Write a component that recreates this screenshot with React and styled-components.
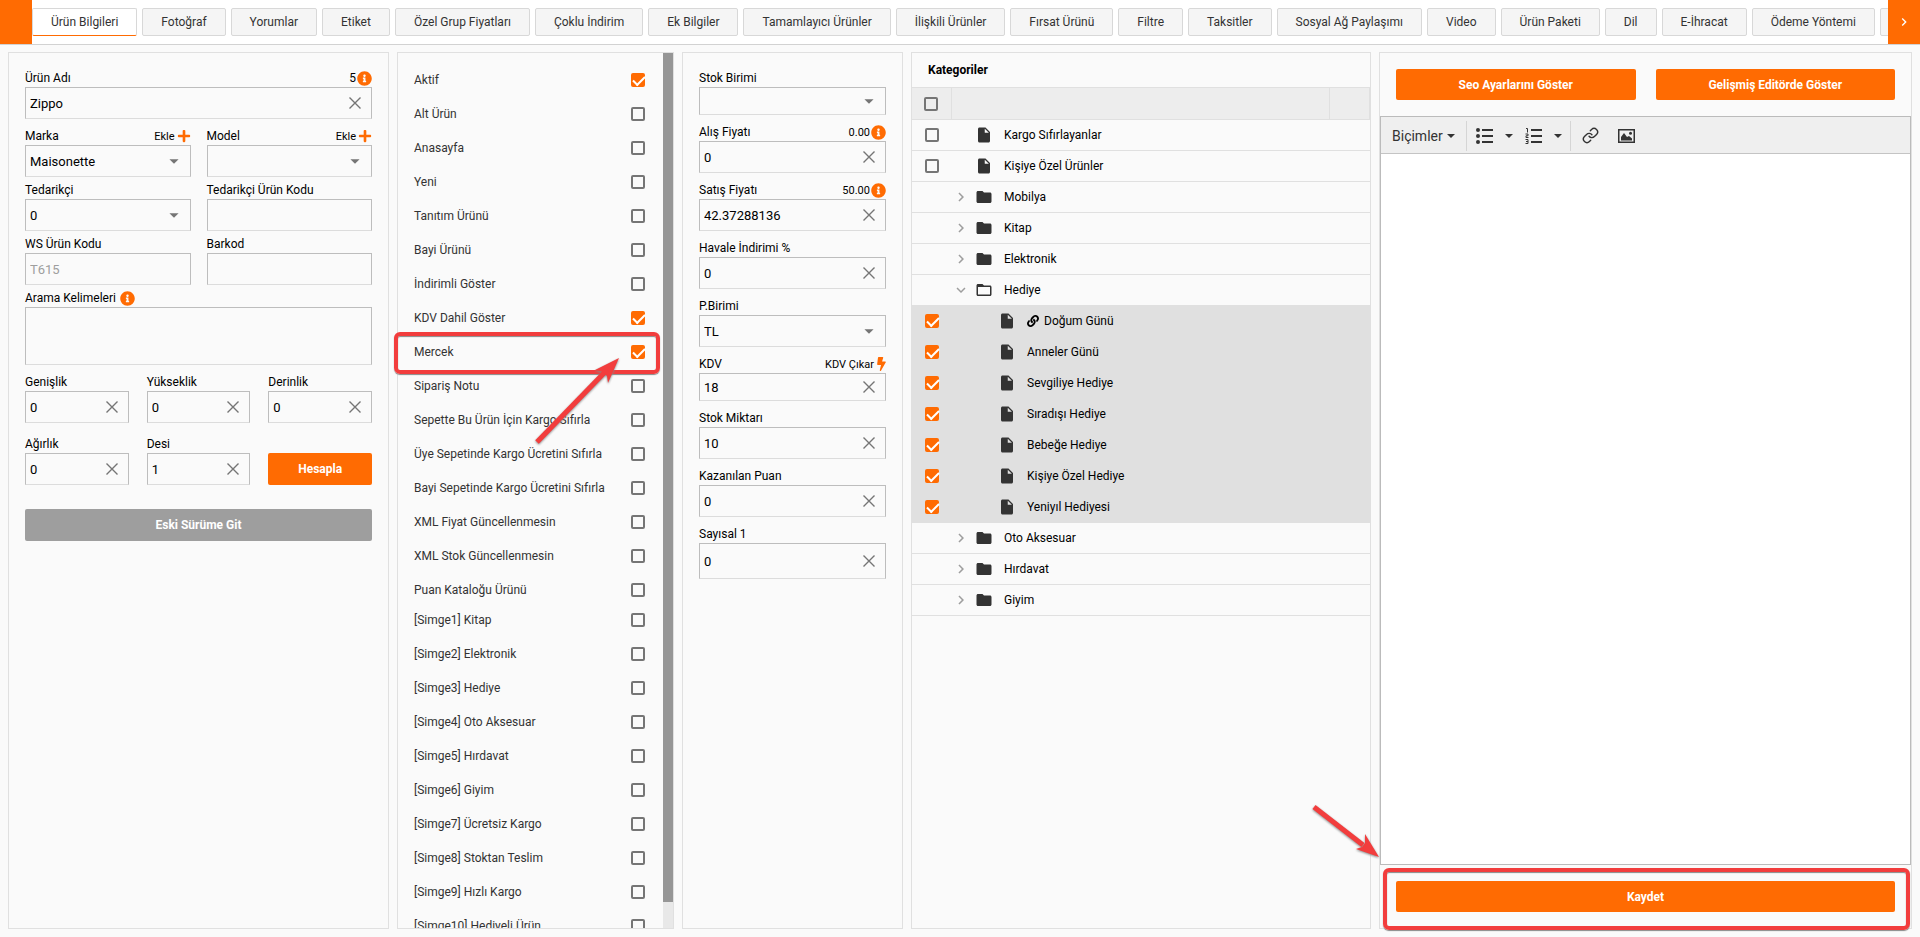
import { useState } from "react";
import styled, { createGlobalStyle, css } from "styled-components";
import { FaInfoCircle, FaLink, FaPlus } from "react-icons/fa";
import {
    MdArrowDropDown,
    MdChevronRight,
    MdExpandMore,
    MdFolder,
    MdFolderOpen,
    MdInsertDriveFile,
} from "react-icons/md";
import { Link as LinkIcon } from "lucide-react";

const orange = "#ff6b02";
const line = "#e0e0e0";
const red = "#f23d3d";

const GlobalStyle = createGlobalStyle`
* { box-sizing: border-box; }
body {
margin: 0;
background: #fafafa;
color: #000;
font-family: Roboto, "Liberation Sans", sans-serif;
font-size: 12px;
}
button, input, select, textarea { font: inherit; color: inherit; }
`

const Page = styled.div`
display: flex;
flex-direction: column;
height: 100vh;
`

/* tabs */
const TabBar = styled.nav`
display: flex;
flex: none;
background: #fff;
border-bottom: 1px solid #d2d2d2;
`
const TabScroll = styled.button`
flex: none;
display: flex;
align-items: center;
justify-content: center;
width: 32px;
height: 44px;
padding: 0;
border: 0;
background: ${orange};
color: #fff;
`
const Tabs = styled.div`
flex: 1;
min-width: 0;
display: flex;
align-items: center;
gap: 5px;
overflow: hidden;
`
const Tab = styled.button`
flex: none;
height: 28px;
min-width: 44px;
padding: 0 18px;
border: 1px solid #d8d8d8;
border-radius: 2px;
background: #f5f5f5;
color: #333;
${(p) => p.$active && css`
background: #fff;
border-bottom-color: ${orange};
`}
`

/* panels */
const Panels = styled.main`
flex: 1;
min-height: 0;
display: grid;
grid-template-columns: 381fr 277fr 221fr 460fr 533fr;
gap: 8px;
padding: 7px 8px 8px;
`
const Panel = styled.section`
position: relative;
min-width: 0;
min-height: 0;
border: 1px solid ${line};
`
const FormPanel = styled(Panel)`
padding: 16px;
`
const Row = styled.div`
display: grid;
grid-template-columns: repeat(${(p) => p.$cols || 1}, minmax(0, 1fr));
gap: ${(p) => (p.$cols === 3 ? 18 : 16)}px;
align-items: end;
margin-bottom: ${(p) => p.$space || 4}px;
`
const FieldHead = styled.div`
display: flex;
justify-content: ${(p) => (p.$near ? "flex-start" : "space-between")};
gap: 4px;
align-items: center;
height: 18px;
`
const Side = styled.span`
display: flex;
align-items: center;
gap: ${(p) => p.$gap || 1}px;
font-size: ${(p) => (p.$large ? 12 : 11)}px;
svg { color: ${orange}; }
`
const AddLink = styled.a`
display: flex;
align-items: center;
gap: 2px;
color: #000;
font-size: 11px;
text-decoration: none;
svg { color: ${orange}; }
`
const Box = styled.div`
position: relative;
display: flex;
height: ${(p) => p.$height || 32}px;
border: 1px solid #bdbdbd;
border-bottom-color: #dcdcdc;
font-size: 13px;
> svg {
position: absolute;
right: 5px;
top: 50%;
margin-top: -11px;
color: #757575;
pointer-events: none;
}
`
const Input = styled.input`
flex: 1;
width: 0;
padding: 0 4px;
border: 0;
background: transparent;
outline: none;
&:disabled { color: #9e9e9e; }
`
const Select = styled.select`
flex: 1;
width: 0;
padding: 0 4px;
border: 0;
background: transparent;
appearance: none;
outline: none;
`
const TextArea = styled.textarea`
display: block;
width: 100%;
height: 58px;
border: 1px solid #bdbdbd;
border-bottom-color: #dcdcdc;
background: transparent;
resize: none;
`
const ClearButton = styled.button`
flex: none;
display: flex;
align-items: center;
justify-content: center;
width: 32px;
padding: 0;
border: 0;
background: transparent;
`
const Button = styled.button`
width: 100%;
height: ${(p) => p.$height || 32}px;
padding: 0;
border: 0;
border-radius: 2px;
background: ${(p) => (p.$grey ? "#9e9e9e" : orange)};
color: #fff;
font-weight: bold;
`
const Spaced = styled.div`
padding-top: 20px;
`

/* check list */
const CheckBox = styled.input.attrs({ type: "checkbox" })`
flex: none;
appearance: none;
display: block;
position: relative;
width: 14px;
height: 14px;
margin: 0;
border: 2px solid #757575;
border-radius: 2px;
&:checked {
border-color: ${orange};
background: ${orange};
}
&:checked::after {
content: "";
position: absolute;
left: 0;
top: 1px;
width: 10px;
height: 5px;
border: solid #fff;
border-width: 0 0 2px 2px;
transform: rotate(-45deg);
}
`
const CheckPanel = styled(Panel)`
display: flex;
`
const CheckArea = styled.div`
flex: 1;
min-width: 0;
padding: 12px 18px 0 16px;
overflow: hidden;
`
const CheckGroup = styled.div`
display: flex;
flex-direction: column;
gap: 4px;
`
const CheckRow = styled.label`
display: flex;
flex: none;
align-items: center;
justify-content: space-between;
height: 30px;
color: #333;
white-space: nowrap;
`
const ScrollTrack = styled.div`
flex: none;
width: 10px;
background: #e8e8e8;
`
const ScrollThumb = styled.div`
height: 97%;
background: #969696;
`

/* categories */
const PanelTitle = styled.h2`
height: 34px;
margin: 0;
padding-left: 16px;
font-size: 12px;
line-height: 34px;
`
const Table = styled.table`
width: 100%;
table-layout: fixed;
border-collapse: separate;
border-spacing: 0;
th {
height: 33px;
padding: 0 0 0 12px;
background: #ededed;
border: solid ${line};
border-width: 1px 1px 1px 0;
}
td {
height: 31px;
padding: 0;
border-bottom: 1px solid ${line};
}
td:first-child { padding-left: 13px; }
`
const CategoryRow = styled.tr`
background: ${(p) => (p.$selected ? "#e0e0e0" : "transparent")};
`
const TreeItem = styled.div`
display: flex;
align-items: center;
padding-left: ${(p) => (p.$child ? 23 : 0)}px;
`
const Toggle = styled.span`
display: flex;
justify-content: center;
width: 18px;
margin-right: 5px;
color: #9e9e9e;
`
const TypeIcon = styled.span`
display: flex;
width: 18px;
margin-right: 11px;
color: #333;
`
const Linked = styled.span`
display: flex;
margin-right: 5px;
`

/* editor */
const EditorPanel = styled(Panel)`
display: flex;
flex-direction: column;
`
const EditorActions = styled.div`
display: grid;
grid-template-columns: 1fr 1fr;
gap: 20px;
padding: 16px;
`
const Editor = styled.div`
flex: 1;
min-height: 0;
display: flex;
flex-direction: column;
border: 1px solid #bbb;
`
const Toolbar = styled.div`
display: flex;
align-items: center;
height: 37px;
flex: none;
padding: 1px 0 0 5px;
background: #efefef;
border-bottom: 1px solid #c4c4c4;
`
const ToolGroup = styled.div`
display: flex;
align-items: center;
height: 30px;
padding-right: 5px;
& + & {
border-left: 1px solid #d5d5d5;
}
`
const Tool = styled.button`
display: flex;
align-items: center;
justify-content: center;
gap: 4px;
height: 30px;
padding: 0 ${(p) => p.$pad}px;
border: 0;
background: transparent;
color: #333;
font-size: 14px;
`
const Writing = styled.textarea`
flex: 1;
width: 100%;
border: 0;
background: #fff;
resize: none;
outline: none;
`
const Footer = styled.div`
position: relative;
flex: none;
padding: 16px;
`

/* marks over the page */
const CheckMark = styled.div`
position: absolute;
left: -4px;
right: 13px;
top: 279px;
height: 42px;
border: 4px solid ${red};
border-radius: 6px;
box-shadow: 0 1px 1px #888, inset 0 1px 1px #888;
pointer-events: none;
`
const SaveMark = styled(CheckMark)`
left: 3px;
right: 1px;
top: 3px;
bottom: -2px;
height: auto;
`
const CheckArrow = styled.svg`
position: absolute;
left: 135px;
top: 301px;
filter: drop-shadow(0 1px 1px #888);
pointer-events: none;
`
const SaveArrow = styled(CheckArrow)`
left: -70px;
top: -62px;
`

const tabs = [
    "Ürün Bilgileri", "Fotoğraf", "Yorumlar", "Etiket", "Özel Grup Fiyatları",
    "Çoklu İndirim", "Ek Bilgiler", "Tamamlayıcı Ürünler", "İlişkili Ürünler",
    "Fırsat Ürünü", "Filtre", "Taksitler", "Sosyal Ağ Paylaşımı", "Video",
    "Ürün Paketi", "Dil", "E-İhracat", "Ödeme Yöntemi", "",
]

const options = [
    ["Aktif", true], ["Alt Ürün"], ["Anasayfa"], ["Yeni"], ["Tanıtım Ürünü"],
    ["Bayi Ürünü"], ["İndirimli Göster"], ["KDV Dahil Göster", true],
    ["Mercek", true], ["Sipariş Notu"], ["Sepette Bu Ürün İçin Kargo Sıfırla"],
    ["Üye Sepetinde Kargo Ücretini Sıfırla"],
    ["Bayi Sepetinde Kargo Ücretini Sıfırla"], ["XML Fiyat Güncellenmesin"],
    ["XML Stok Güncellenmesin"], ["Puan Kataloğu Ürünü"],
]

const symbols = [
    ["[Simge1] Kitap"], ["[Simge2] Elektronik"], ["[Simge3] Hediye"],
    ["[Simge4] Oto Aksesuar"], ["[Simge5] Hırdavat"], ["[Simge6] Giyim"],
    ["[Simge7] Ücretsiz Kargo"], ["[Simge8] Stoktan Teslim"],
    ["[Simge9] Hızlı Kargo"], ["[Simge10] Hediyeli Ürün"],
]

const categories = [
    { name: "Kargo Sıfırlayanlar", type: "file" },
    { name: "Kişiye Özel Ürünler", type: "file" },
    { name: "Mobilya", type: "folder" },
    { name: "Kitap", type: "folder" },
    { name: "Elektronik", type: "folder" },
    { name: "Hediye", type: "open" },
    { name: "Doğum Günü", type: "file", child: true, linked: true },
    { name: "Anneler Günü", type: "file", child: true },
    { name: "Sevgiliye Hediye", type: "file", child: true },
    { name: "Sıradışı Hediye", type: "file", child: true },
    { name: "Bebeğe Hediye", type: "file", child: true },
    { name: "Kişiye Özel Hediye", type: "file", child: true },
    { name: "Yeniyıl Hediyesi", type: "file", child: true },
    { name: "Oto Aksesuar", type: "folder" },
    { name: "Hırdavat", type: "folder" },
    { name: "Giyim", type: "folder" },
]

const typeIcons = {
    file: <MdInsertDriveFile size={18} />,
    folder: <MdFolder size={18} />,
    open: <MdFolderOpen size={18} />,
}

function Info({ text, large }) {
    return <Side $large={large}>{text}<FaInfoCircle size={15} /></Side>
}

function Add() {
    return <AddLink href="#">Ekle<FaPlus size={14} /></AddLink>
}

function Bolt() {
    return (
        <svg width="9" height="14" viewBox="0 0 320 512" fill="currentColor">
            <path d="M296 160H180.600l42.600-129.800C227.200 15 215.700 0 200 0H56C44 0 33.800 8.900 32.200 20.800l-32 240C-1.700 275.200 9.500 288 24 288h118.700L96.600 482.500c-3.600 15.200 8 29.500 23.300 29.500 8.400 0 16.400-4.400 20.800-12l176-304c9.300-15.900-2.200-36-20.700-36z" />
        </svg>
    )
}

function TextField({ id, label, side, value = "", clear, height, disabled }) {
    const [text, setText] = useState(value)
    return (
        <div>
            <FieldHead><label htmlFor={id}>{label}</label>{side}</FieldHead>
            <Box $height={height}>
                <Input id={id} value={text} disabled={disabled} onChange={(e) => setText(e.target.value)} />
                {clear && (
                    <ClearButton type="button" aria-label="Temizle" onClick={() => setText("")}>
                        <svg width="12" height="12" viewBox="0 0 12 12" stroke="#757575" strokeWidth="1.4">
                            <path d="M.5.5l11 11M11.5.5l-11 11" />
                        </svg>
                    </ClearButton>
                )}
            </Box>
        </div>
    )
}

function SelectField({ id, label, side, value = "", height }) {
    return (
        <div>
            <FieldHead><label htmlFor={id}>{label}</label>{side}</FieldHead>
            <Box $height={height}>
                <Select id={id} defaultValue={value}>
                    <option value={value}>{value}</option>
                </Select>
                <MdArrowDropDown size={22} />
            </Box>
        </div>
    )
}

function CheckList({ items }) {
    return (
        <CheckGroup>
            {items.map(([name, checked]) => (
                <CheckRow key={name}>
                    {name}
                    <CheckBox defaultChecked={checked} />
                </CheckRow>
            ))}
        </CheckGroup>
    )
}

function Caret() {
    return (
        <svg width="8" height="4" viewBox="0 0 8 4" fill="#333"><path d="M0 0h8L4 4z" /></svg>
    )
}

function ProductForm() {
    return (
        <FormPanel>
            <Row $space={8}>
                <TextField id="name" label="Ürün Adı" value="Zippo" clear side={<Info text="5" large />} />
            </Row>
            <Row $cols={2}>
                <SelectField id="brand" label="Marka" value="Maisonette" side={<Add />} />
                <SelectField id="model" label="Model" side={<Add />} />
            </Row>
            <Row $cols={2}>
                <SelectField id="supplier" label="Tedarikçi" value="0" />
                <TextField id="supplierCode" label="Tedarikçi Ürün Kodu" />
            </Row>
            <Row $cols={2}>
                <TextField id="wsCode" label="WS Ürün Kodu" value="T615" disabled />
                <TextField id="barcode" label="Barkod" />
            </Row>
            <Row $space={8}>
                <div>
                    <FieldHead $near><label htmlFor="keywords">Arama Kelimeleri</label><Info /></FieldHead>
                    <TextArea id="keywords" />
                </div>
            </Row>
            <Row $cols={3} $space={12}>
                <TextField id="width" label="Genişlik" value="0" clear />
                <TextField id="height" label="Yükseklik" value="0" clear />
                <TextField id="depth" label="Derinlik" value="0" clear />
            </Row>
            <Row $cols={3}>
                <TextField id="weight" label="Ağırlık" value="0" clear />
                <TextField id="desi" label="Desi" value="1" clear />
                <Button>Hesapla</Button>
            </Row>
            <Spaced>
                <Button $grey>Eski Sürüme Git</Button>
            </Spaced>
        </FormPanel>
    )
}

function PriceForm() {
    return (
        <FormPanel>
            <Row $space={8}><SelectField id="unit" label="Stok Birimi" height={28} /></Row>
            <Row $space={8}><TextField id="buy" label="Alış Fiyatı" value="0" clear side={<Info text="0.00" />} /></Row>
            <Row $space={8}><TextField id="sell" label="Satış Fiyatı" value="42.37288136" clear side={<Info text="50.00" />} /></Row>
            <Row $space={8}><TextField id="discount" label="Havale İndirimi %" value="0" clear /></Row>
            <Row $space={8}><SelectField id="currency" label="P.Birimi" value="TL" /></Row>
            <Row $space={8}>
                <TextField id="vat" label="KDV" value="18" clear height={28} side={<Side $gap={3}>KDV Çıkar<Bolt /></Side>} />
            </Row>
            <Row $space={8}><TextField id="stock" label="Stok Miktarı" value="10" clear /></Row>
            <Row $space={8}><TextField id="points" label="Kazanılan Puan" value="0" clear /></Row>
            <Row $space={8}><TextField id="number1" label="Sayısal 1" value="0" clear height={36} /></Row>
        </FormPanel>
    )
}

function Categories() {
    return (
        <Panel>
            <PanelTitle>Kategoriler</PanelTitle>
            <Table>
                <colgroup>
                    <col width="40" />
                    <col />
                    <col width="40" />
                </colgroup>
                <thead>
                    <tr>
                        <th><CheckBox aria-label="Kategoriler" /></th>
                        <th />
                        <th />
                    </tr>
                </thead>
                <tbody>
                    {categories.map(({ name, type, child, linked }) => (
                        <CategoryRow key={name} $selected={child}>
                            <td>{type === "file" && <CheckBox defaultChecked={child} aria-label={name} />}</td>
                            <td colSpan={2}>
                                <TreeItem $child={child}>
                                    <Toggle>
                                        {type === "folder" && <MdChevronRight size={18} />}
                                        {type === "open" && <MdExpandMore size={18} />}
                                    </Toggle>
                                    <TypeIcon>{typeIcons[type]}</TypeIcon>
                                    {linked && <Linked><FaLink size={12} /></Linked>}
                                    {name}
                                </TreeItem>
                            </td>
                        </CategoryRow>
                    ))}
                </tbody>
            </Table>
        </Panel>
    )
}

function EditorSide() {
    return (
        <EditorPanel>
            <EditorActions>
                <Button $height={31}>Seo Ayarlarını Göster</Button>
                <Button $height={31}>Gelişmiş Editörde Göster</Button>
            </EditorActions>
            <Editor>
                <Toolbar>
                    <ToolGroup>
                        <Tool $pad={6}>Biçimler <Caret /></Tool>
                    </ToolGroup>
                    <ToolGroup>
                        <Tool $pad={9} aria-label="Madde listesi">
                            <svg width="17" height="16" viewBox="0 0 17 16" fill="#333">
                                <circle cx="2" cy="2" r="2" /><circle cx="2" cy="8" r="2" /><circle cx="2" cy="14" r="2" />
                                <path d="M6 1h11v2H6zM6 7h11v2H6zM6 13h11v2H6z" />
                            </svg>
                        </Tool>
                        <Tool aria-label="Madde seçenekleri" $pad={3}><Caret /></Tool>
                        <Tool $pad={9} aria-label="Numaralı liste">
                            <svg width="17" height="16" viewBox="0 0 17 16" fill="#333">
                                <path d="M6 1h11v2H6zM6 7h11v2H6zM6 13h11v2H6z" />
                                <path d="M1 .5h1.500V4.500M.5 6h2.500v1.800H1V9.500h2.500M.5 11.500h2.500v4H.5M1 13.500h2" fill="none" stroke="#333" />
                            </svg>
                        </Tool>
                        <Tool aria-label="Numara seçenekleri" $pad={3}><Caret /></Tool>
                    </ToolGroup>
                    <ToolGroup>
                        <Tool $pad={11} aria-label="Bağlantı"><LinkIcon size={17} strokeWidth={2} /></Tool>
                        <Tool $pad={8} aria-label="Resim">
                            <svg width="17" height="14" viewBox="0 0 17 14">
                                <path d="M.75.75h15.500v12.500H.75z" fill="none" stroke="#333" strokeWidth="1.500" />
                                <path d="M3 11.500V8l3-4 3 4 2-1 3 2.500v2z" fill="#333" />
                                <circle cx="12.500" cy="4.200" r="1.500" fill="#333" />
                            </svg>
                        </Tool>
                    </ToolGroup>
                </Toolbar>
                <Writing aria-label="Açıklama" />
            </Editor>
            <Footer>
                <Button $height={31}>Kaydet</Button>
                <SaveMark />
                <SaveArrow width="74" height="60" viewBox="0 0 74 60">
                    <path d="M4 4l49 38" stroke={red} strokeWidth="5" />
                    <path d="M69 54L55 31v9l-3 4-6 2z" fill={red} />
                </SaveArrow>
            </Footer>
        </EditorPanel>
    )
}

function App() {
    return (
        <>
            <GlobalStyle />
            <Page>
                <TabBar>
                    <TabScroll aria-label="Önceki" />
                    <Tabs>
                        {tabs.map((name, i) => (
                            <Tab key={i} $active={i === 0}>{name}</Tab>
                        ))}
                    </Tabs>
                    <TabScroll aria-label="Sonraki"><MdChevronRight size={16} /></TabScroll>
                </TabBar>
                <Panels>
                    <ProductForm />
                    <CheckPanel>
                        <CheckArea>
                            <CheckList items={options} />
                            <CheckList items={symbols} />
                        </CheckArea>
                        <ScrollTrack><ScrollThumb /></ScrollTrack>
                        <CheckMark />
                        <CheckArrow width="90" height="94" viewBox="0 0 90 94">
                            <path d="M4 88l68-70" stroke={red} strokeWidth="5" />
                            <path d="M86 4L62 16l8 2 4 4 1 7z" fill={red} />
                        </CheckArrow>
                    </CheckPanel>
                    <PriceForm />
                    <Categories />
                    <EditorSide />
                </Panels>
            </Page>
        </>
    )
}

export default App
